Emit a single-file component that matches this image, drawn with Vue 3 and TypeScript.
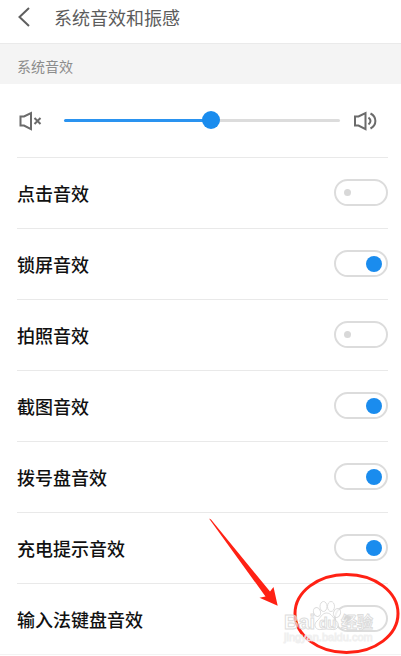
<script setup lang="ts">
import { ref } from 'vue'

interface SoundSetting {
  id: string
  label: string
  on: boolean
}

const volume = ref(53.5)

const settings = ref<SoundSetting[]>([
  { id: 'tap', label: '点击音效', on: false },
  { id: 'lock', label: '锁屏音效', on: true },
  { id: 'camera', label: '拍照音效', on: false },
  { id: 'screenshot', label: '截图音效', on: true },
  { id: 'dialpad', label: '拨号盘音效', on: true },
  { id: 'charging', label: '充电提示音效', on: true },
  { id: 'keyboard', label: '输入法键盘音效', on: false },
])
</script>

<template>
  <div class="page">
    <header class="bar">
      <button class="back" type="button" aria-label="返回">
        <svg width="14" height="22" viewBox="0 0 14 22">
          <path d="M12 2 L2.500 11 L12 20" />
        </svg>
      </button>
      <h1 class="title">系统音效和振感</h1>
    </header>

    <h2 class="section">系统音效</h2>

    <main class="list">
      <div class="volume">
        <svg class="speaker" width="26" height="20" viewBox="0 0 26 20">
          <path d="M3.500 5.500 H7 L14 2 V18.200 L7 14.500 H3.500 Z" />
          <path d="M17.500 7 L23.500 13 M23.500 7 L17.500 13" />
        </svg>
        <input
          v-model.number="volume"
          class="slider"
          type="range"
          min="0"
          max="100"
          step="0.5"
          aria-label="系统音量"
          :style="{ '--level': volume + '%' }"
        />
        <svg class="speaker" width="26" height="20" viewBox="0 0 26 20">
          <path d="M3 5.500 H6.500 L13.500 2 V18.200 L6.500 14.500 H3 Z" />
          <path d="M16.500 6.500 Q20.500 10 16.500 13.500 M18.500 2.500 C25 6 25 14 18.500 17.500" />
        </svg>
      </div>

      <div v-for="item in settings" :key="item.id" class="row">
        <label class="name" :for="item.id">{{ item.label }}</label>
        <input :id="item.id" v-model="item.on" class="switch" type="checkbox" role="switch" />
      </div>
    </main>

    <svg class="marks" width="201" height="141" viewBox="200 515 201 141">
      <path class="arrow" d="M209 519.500 L211 520.500 L270 592.500 L273.500 588 L277.700 606.700 L259.500 598.800 L265.500 597.500 Z" />
      <ellipse class="ring" cx="346.500" cy="614.500" rx="51.500" ry="39" />
      <g class="stamp">
        <text class="brand" x="284" y="630">Bai</text>
        <ellipse cx="317" cy="613" rx="3.500" ry="4.500" transform="rotate(-20 317 613)" />
        <ellipse cx="323.500" cy="607.500" rx="3.500" ry="5" />
        <ellipse cx="331" cy="607.500" rx="3.500" ry="5" />
        <ellipse cx="337" cy="614" rx="3.500" ry="4.500" transform="rotate(20 337 614)" />
        <path d="M326.500 614 C322 614 320.500 619 317 622 C312.500 626 316 631.500 321 630.500 Q326.500 629.500 332 630.500 C337.500 631.500 340.500 626 336.500 622 C333 619 331.500 614 326.500 614 Z" />
        <text class="du" x="319" y="629">du</text>
        <text class="cjk" x="341" y="629">经验</text>
        <text class="site" x="284" y="642">jingyan.baidu.com</text>
      </g>
    </svg>
  </div>
</template>

<style>
body {
  background: #fff;
}
</style>

<style scoped>
.page {
  position: relative;
  border-bottom: 1px solid #f3f3f3;
  background: #fff;
  font-family: "Noto Sans CJK SC", "Noto Sans", sans-serif;
}

.bar {
  display: flex;
  align-items: center;
  gap: 23px;
  box-sizing: border-box;
  height: 43px;
  padding: 0 16px 10px;
}

.back {
  display: flex;
  padding: 0;
  border: 0;
  background: none;
}

.back svg {
  fill: none;
  stroke: #5f5f5f;
  stroke-width: 2;
  margin-left: 1px;
}

.title {
  margin: 0;
  color: #5c5c5c;
  font-size: 18px;
  font-weight: 400;
  line-height: 26px;
}

.section {
  margin: 0;
  padding: 12px 17px 8px;
  border-top: 1px solid #eaeaea;
  background: #f4f4f4;
  color: #8c8c8c;
  font-size: 14px;
  font-weight: 400;
  line-height: 20px;
}

.list {
  padding: 0 13px 0 17px;
}

.volume {
  display: flex;
  align-items: center;
  height: 73px;
  padding-right: 10px;
}

.speaker {
  flex: none;
  fill: none;
  stroke: #6b6b6b;
  stroke-width: 2;
}

.slider {
  flex: 1;
  min-width: 0;
  height: 20px;
  margin: 0 12px 0 21px;
  appearance: none;
  background: none;
}

.slider::-webkit-slider-runnable-track {
  height: 3px;
  border-radius: 2px;
  background: linear-gradient(to right, #2a93f0 var(--level), #dcdcdc var(--level));
}

.slider::-webkit-slider-thumb {
  appearance: none;
  width: 18px;
  height: 18px;
  margin-top: -8px;
  border-radius: 50%;
  background: #1a8cee;
}

.row {
  display: flex;
  align-items: center;
  justify-content: space-between;
  box-sizing: border-box;
  height: 71px;
  padding-bottom: 1px;
  border-top: 1px solid #e9e9e9;
}

.name {
  color: #111;
  font-size: 18px;
  font-weight: 500;
  line-height: 26px;
}

.switch {
  display: flex;
  align-items: center;
  box-sizing: border-box;
  width: 54px;
  height: 27px;
  margin: 0;
  padding: 0 8px;
  appearance: none;
  border: 2px solid #dcdcdc;
  border-radius: 14px;
  background: #fff;
}

.switch::before {
  content: "";
  width: 7px;
  height: 7px;
  border-radius: 50%;
  background: #d8d8d8;
}

.switch:checked {
  justify-content: flex-end;
  padding: 0 4px;
}

.switch:checked::before {
  width: 16px;
  height: 16px;
  background: #1a8cee;
}

.marks {
  position: absolute;
  right: 0;
  bottom: -1px;
  pointer-events: none;
}

.stamp {
  fill: #fff;
  fill-opacity: 0.6;
  stroke: #d4d4d4;
  stroke-opacity: 0.8;
  stroke-width: 1;
  font-family: "Liberation Sans", "Noto Sans CJK SC", sans-serif;
  font-weight: 700;
}

.brand {
  font-size: 20px;
}

.du {
  font-size: 14px;
}

.cjk {
  font-family: "Noto Sans CJK SC", sans-serif;
  font-size: 16px;
}

.site {
  font-size: 11px;
  font-weight: 400;
  stroke: #ececec;
}

.arrow {
  fill: #ff2114;
}

.ring {
  fill: none;
  stroke: #ff2114;
  stroke-width: 3;
}
</style>
